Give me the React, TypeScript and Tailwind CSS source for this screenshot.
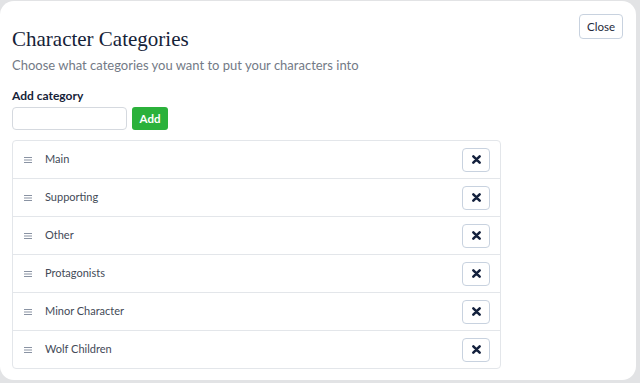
const CATEGORIES = ['Main', 'Supporting', 'Other', 'Protagonists', 'Minor Character', 'Wolf Children'];

function XIcon() {
  return (
    <svg width="9" height="9" viewBox="0 0 10 10" aria-hidden>
      <path d="M1.5 1.5 L8.5 8.5 M8.5 1.5 L1.5 8.5" stroke="#14213d" strokeWidth="2.8" strokeLinecap="round" />
    </svg>
  );
}

function GripIcon() {
  return (
    <svg width="8" height="8" viewBox="0 0 8 8" aria-hidden>
      <path d="M0 1.5 H8 M0 4 H8 M0 6.5 H8" stroke="#8a93a3" strokeWidth="1" />
    </svg>
  );
}

export default function App() {
  return (
    <div className="h-[383px] w-[640px] overflow-hidden bg-[#e2e3e5] pt-[1px]" style={{ fontFamily: 'Lato, "Open Sans", sans-serif' }}>
      <div className="relative h-[379px] w-[636px] rounded-[14px] bg-white px-3 pt-[25px]">
        <button
          type="button"
          className="absolute right-[13px] top-[13px] h-[25px] w-[44px] rounded-[4px] border border-[#c8d2df] bg-white text-[11.5px] text-[#1e2a3b]"
        >
          Close
        </button>

        <h1 className="text-[21px] leading-[26px] text-[#152238]" style={{ fontFamily: '"Liberation Serif", serif' }}>
          Character Categories
        </h1>
        <p className="mt-[4px] text-[13px] leading-[18px] text-[#737a86]">
          Choose what categories you want to put your characters into
        </p>

        <div className="mt-[15px] text-[12px] font-bold leading-[14px] text-[#152238]">Add category</div>
        <div className="mt-[4px] flex gap-[5px]">
          <input className="h-[23px] w-[115px] rounded-[4px] border border-[#d5d9df] px-2 text-[12px] outline-none" />
          <button
            type="button"
            className="h-[23px] w-[36px] rounded-[3px] bg-[#2bb13b] text-[11.5px] font-bold text-white"
          >
            Add
          </button>
        </div>

        <ul className="mt-[10px] w-[489px] rounded-[4px] border border-[#e3e6ea]">
          {CATEGORIES.map((name, i) => (
            <li
              key={name}
              className={`flex items-center pl-[11px] pr-[10px] ${i < CATEGORIES.length - 1 ? 'h-[38px] border-b border-[#e3e6ea]' : 'h-[37px]'}`}
            >
              <GripIcon />
              <span className="ml-[13px] flex-1 text-[11px] text-[#434a57]">{name}</span>
              <button
                type="button"
                className="flex h-[24px] w-[28px] items-center justify-center rounded-[4px] border border-[#c8d2df] bg-white"
              >
                <XIcon />
              </button>
            </li>
          ))}
        </ul>
      </div>
    </div>
  );
}
